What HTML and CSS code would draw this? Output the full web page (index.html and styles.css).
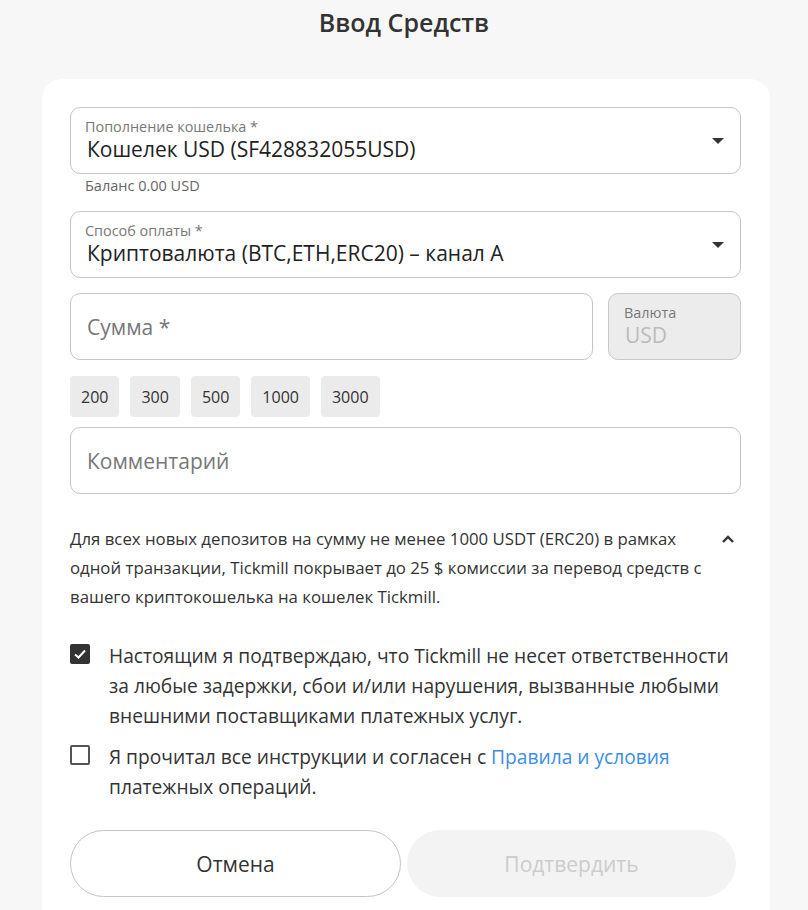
FILE: index.html
```html
<!DOCTYPE html>
<html lang="ru">
<head>
    <meta charset="UTF-8">
    <meta name="viewport" content="width=device-width, initial-scale=1.0">
    <title>Ввод Средств</title>
    <link rel="stylesheet" href="styles.css">
</head>
<body>
    <h1 class="page-title">Ввод Средств</h1>

    <div class="card">
        <form class="deposit-form">
            <div class="field-group">
                <div class="field select-field">
                    <div class="field-body">
                        <span class="field-label">Пополнение кошелька *</span>
                        <span class="field-value">Кошелек USD (SF428832055USD)</span>
                    </div>
                    <span class="caret"></span>
                </div>
                <div class="field-hint">Баланс 0.00 USD</div>
            </div>

            <div class="field select-field">
                <div class="field-body">
                    <span class="field-label">Способ оплаты *</span>
                    <span class="field-value">Криптовалюта (BTC,ETH,ERC20) – канал A</span>
                </div>
                <span class="caret"></span>
            </div>

            <div class="amount-row">
                <div class="field amount-field">
                    <span class="placeholder">Сумма *</span>
                </div>
                <div class="field currency-field">
                    <span class="field-label">Валюта</span>
                    <span class="field-value muted">USD</span>
                </div>
            </div>

            <div class="chips">
                <button type="button" class="chip">200</button>
                <button type="button" class="chip">300</button>
                <button type="button" class="chip">500</button>
                <button type="button" class="chip">1000</button>
                <button type="button" class="chip">3000</button>
            </div>

            <div class="field">
                <span class="placeholder">Комментарий</span>
            </div>

            <div class="notice">
                <p>Для всех новых депозитов на сумму не менее 1000 USDT (ERC20) в рамках одной транзакции, Tickmill покрывает до 25 $ комиссии за перевод средств с вашего криптокошелька на кошелек Tickmill.</p>
                <svg class="chevron" width="14" height="10" viewBox="0 0 14 10">
                    <path d="M2 8 L7 3 L12 8" fill="none" stroke="#333" stroke-width="2.4"/>
                </svg>
            </div>

            <div class="agreements">
                <label class="check">
                    <span class="box checked">
                        <svg width="14" height="12" viewBox="0 0 14 12">
                            <path d="M2 6.5 L5.5 9.5 L12 2.5" fill="none" stroke="#fff" stroke-width="2"/>
                        </svg>
                    </span>
                    <span class="check-text">Настоящим я подтверждаю, что Tickmill не несет ответственности за любые задержки, сбои и/или нарушения, вызванные любыми внешними поставщиками платежных услуг.</span>
                </label>
                <label class="check">
                    <span class="box"></span>
                    <span class="check-text">Я прочитал все инструкции и согласен с <a href="#" class="link">Правила и условия</a> платежных операций.</span>
                </label>
            </div>

            <div class="actions">
                <button type="button" class="btn btn-cancel">Отмена</button>
                <button type="button" class="btn btn-confirm" disabled>Подтвердить</button>
            </div>
        </form>
    </div>
</body>
</html>
```

FILE: styles.css
```css
body {
    margin: 0;
    background-color: #f7f7f7;
    color: #333;
    font-family: "Open Sans", "Noto Sans", sans-serif;
}
.page-title {
    margin: 0;
    padding-top: 4px;
    height: 75px;
    text-align: center;
    font-size: 25px;
    font-weight: 600;
    line-height: 36px;
    color: #333;
}
.card {
    width: 728px;
    margin-left: 42px;
    box-sizing: border-box;
    padding: 28px 29px 40px 28px;
    background-color: #fff;
    border-radius: 20px;
}
.deposit-form {
    display: flex;
    flex-direction: column;
}
.field {
    box-sizing: border-box;
    height: 67px;
    border: 1px solid #c4c4c4;
    border-radius: 10px;
    padding: 0 16px;
    display: flex;
    align-items: center;
}
.select-field {
    justify-content: space-between;
}
.field-body {
    display: flex;
    flex-direction: column;
}
.field-label {
    font-size: 14.4px;
    line-height: 18px;
    color: #777;
    margin-left: -2px;
}
.field-value {
    font-size: 21px;
    line-height: 27px;
    color: #222;
}
.field-value.muted {
    color: #bbb;
}
.caret {
    width: 0;
    height: 0;
    border-left: 6px solid transparent;
    border-right: 6px solid transparent;
    border-top: 6px solid #333;
}
.field-hint {
    font-size: 14.5px;
    line-height: 18px;
    color: #666;
    padding: 3px 0 0 15px;
    height: 37px;
    box-sizing: border-box;
}
.placeholder {
    font-size: 21px;
    color: #777;
}
.amount-row {
    display: flex;
    gap: 15px;
    margin-top: 15px;
}
.amount-field {
    flex: 1;
}
.currency-field {
    width: 133px;
    flex-direction: column;
    align-items: flex-start;
    justify-content: center;
    padding-left: 16px;
    background-color: #ececec;
    border-color: #c8c8c8;
}
.currency-field .field-label {
    margin-left: -1px;
}
.chips {
    display: flex;
    gap: 11px;
    margin: 16px 0 10px;
}
.chip {
    height: 41px;
    padding: 0 11px;
    border: none;
    border-radius: 4px;
    background-color: #ebebeb;
    color: #333;
    font-family: inherit;
    font-size: 16px;
}
.notice {
    display: flex;
    align-items: flex-start;
    justify-content: space-between;
    margin-top: 30px;
}
.notice p {
    margin: 0;
    width: 640px;
    font-size: 16.8px;
    line-height: 29px;
    color: #333;
}
.chevron {
    margin: 10px 6px 0 0;
}
.agreements {
    display: flex;
    flex-direction: column;
    gap: 11px;
    margin-top: 30px;
}
.check {
    display: flex;
    align-items: flex-start;
    gap: 19px;
}
.box {
    flex: none;
    box-sizing: border-box;
    width: 20px;
    height: 20px;
    margin-top: 3px;
    border: 2px solid #555;
    border-radius: 2px;
    display: flex;
    align-items: center;
    justify-content: center;
}
.box.checked {
    background-color: #333;
    border-color: #333;
}
.check-text {
    font-size: 19.2px;
    line-height: 30px;
    color: #333;
}
.link {
    color: #3a8ee6;
    text-decoration: none;
}
.actions {
    display: flex;
    gap: 6px;
    margin-top: 28px;
    padding-right: 5px;
}
.btn {
    flex: 1;
    height: 67px;
    border-radius: 34px;
    font-family: inherit;
    font-size: 21px;
    cursor: pointer;
}
.btn-cancel {
    background-color: #fff;
    border: 1px solid #c4c4c4;
    color: #333;
}
.btn-confirm {
    background-color: #f3f3f3;
    border: none;
    color: #ccc;
}
```
